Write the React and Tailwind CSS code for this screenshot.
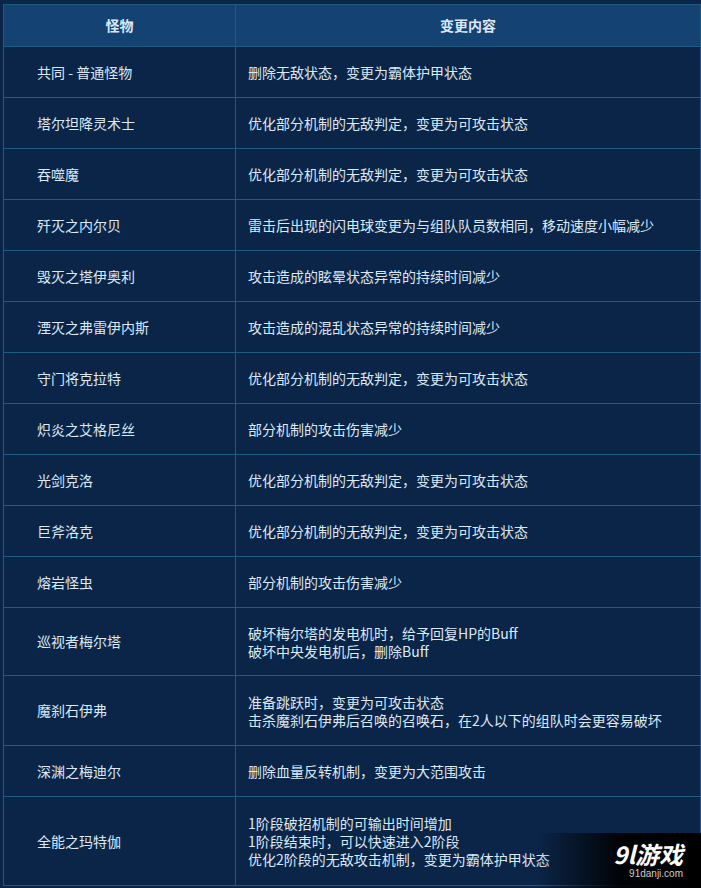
const rows = [
  ["共同 - 普通怪物", ["删除无敌状态，变更为霸体护甲状态"]],
  ["塔尔坦降灵术士", ["优化部分机制的无敌判定，变更为可攻击状态"]],
  ["吞噬魔", ["优化部分机制的无敌判定，变更为可攻击状态"]],
  ["歼灭之内尔贝", ["雷击后出现的闪电球变更为与组队队员数相同，移动速度小幅减少"]],
  ["毁灭之塔伊奥利", ["攻击造成的眩晕状态异常的持续时间减少"]],
  ["湮灭之弗雷伊内斯", ["攻击造成的混乱状态异常的持续时间减少"]],
  ["守门将克拉特", ["优化部分机制的无敌判定，变更为可攻击状态"]],
  ["炽炎之艾格尼丝", ["部分机制的攻击伤害减少"]],
  ["光剑克洛", ["优化部分机制的无敌判定，变更为可攻击状态"]],
  ["巨斧洛克", ["优化部分机制的无敌判定，变更为可攻击状态"]],
  ["熔岩怪虫", ["部分机制的攻击伤害减少"]],
  ["巡视者梅尔塔", ["破坏梅尔塔的发电机时，给予回复HP的Buff", "破坏中央发电机后，删除Buff"], "h-[68px]"],
  ["魔刹石伊弗", ["准备跳跃时，变更为可攻击状态", "击杀魔刹石伊弗后召唤的召唤石，在2人以下的组队时会更容易破坏"], "h-[70px]"],
  ["深渊之梅迪尔", ["删除血量反转机制，变更为大范围攻击"]],
  ["全能之玛特伽", ["1阶段破招机制的可输出时间增加", "1阶段结束时，可以快速进入2阶段", "优化2阶段的无敌攻击机制，变更为霸体护甲状态"], "h-[89px]"],
];
export default function App() {
  return (
    <div className="relative w-[701px] h-[888px] overflow-hidden bg-[#0b2548] pl-[3px] pt-[4px] text-[14px] text-[#dbe9f7]" style={{ fontFamily: '"Microsoft YaHei","Noto Sans CJK SC",sans-serif' }}>
      <div className="border-l border-t border-[#1f5a80]">
        <div className="flex h-[42px] bg-[#144272] font-bold">
          <div className="w-[232px] flex items-center justify-center border-r border-b border-[#1f5a80]">怪物</div>
          <div className="flex-1 flex items-center justify-center border-r border-b border-[#1f5a80]">变更内容</div>
        </div>
        {rows.map(([m, c, h]) => (
          <div key={m} className={`flex ${h || "h-[51px]"}`}>
            <div className="w-[232px] flex items-center pl-[33px] border-r border-b border-[#1f5a80]">{m}</div>
            <div className="flex-1 flex flex-col justify-center pl-[12px] leading-[18px] border-r border-b border-[#1f5a80]">
              {c.map((t) => <div key={t}>{t}</div>)}
            </div>
          </div>
        ))}
      </div>
      <div className="absolute right-0 bottom-0 w-[165px] h-[55px] bg-gradient-to-r from-transparent via-black/90 to-black flex flex-col items-end justify-center pr-[18px]">
        <div className="text-white font-bold text-[24px] leading-[26px] italic">9l游戏</div>
        <div className="text-[#ccc] text-[10px] leading-[13px]" style={{ fontFamily: '"Liberation Sans",sans-serif' }}>91danji.com</div>
      </div>
    </div>
  );
}
